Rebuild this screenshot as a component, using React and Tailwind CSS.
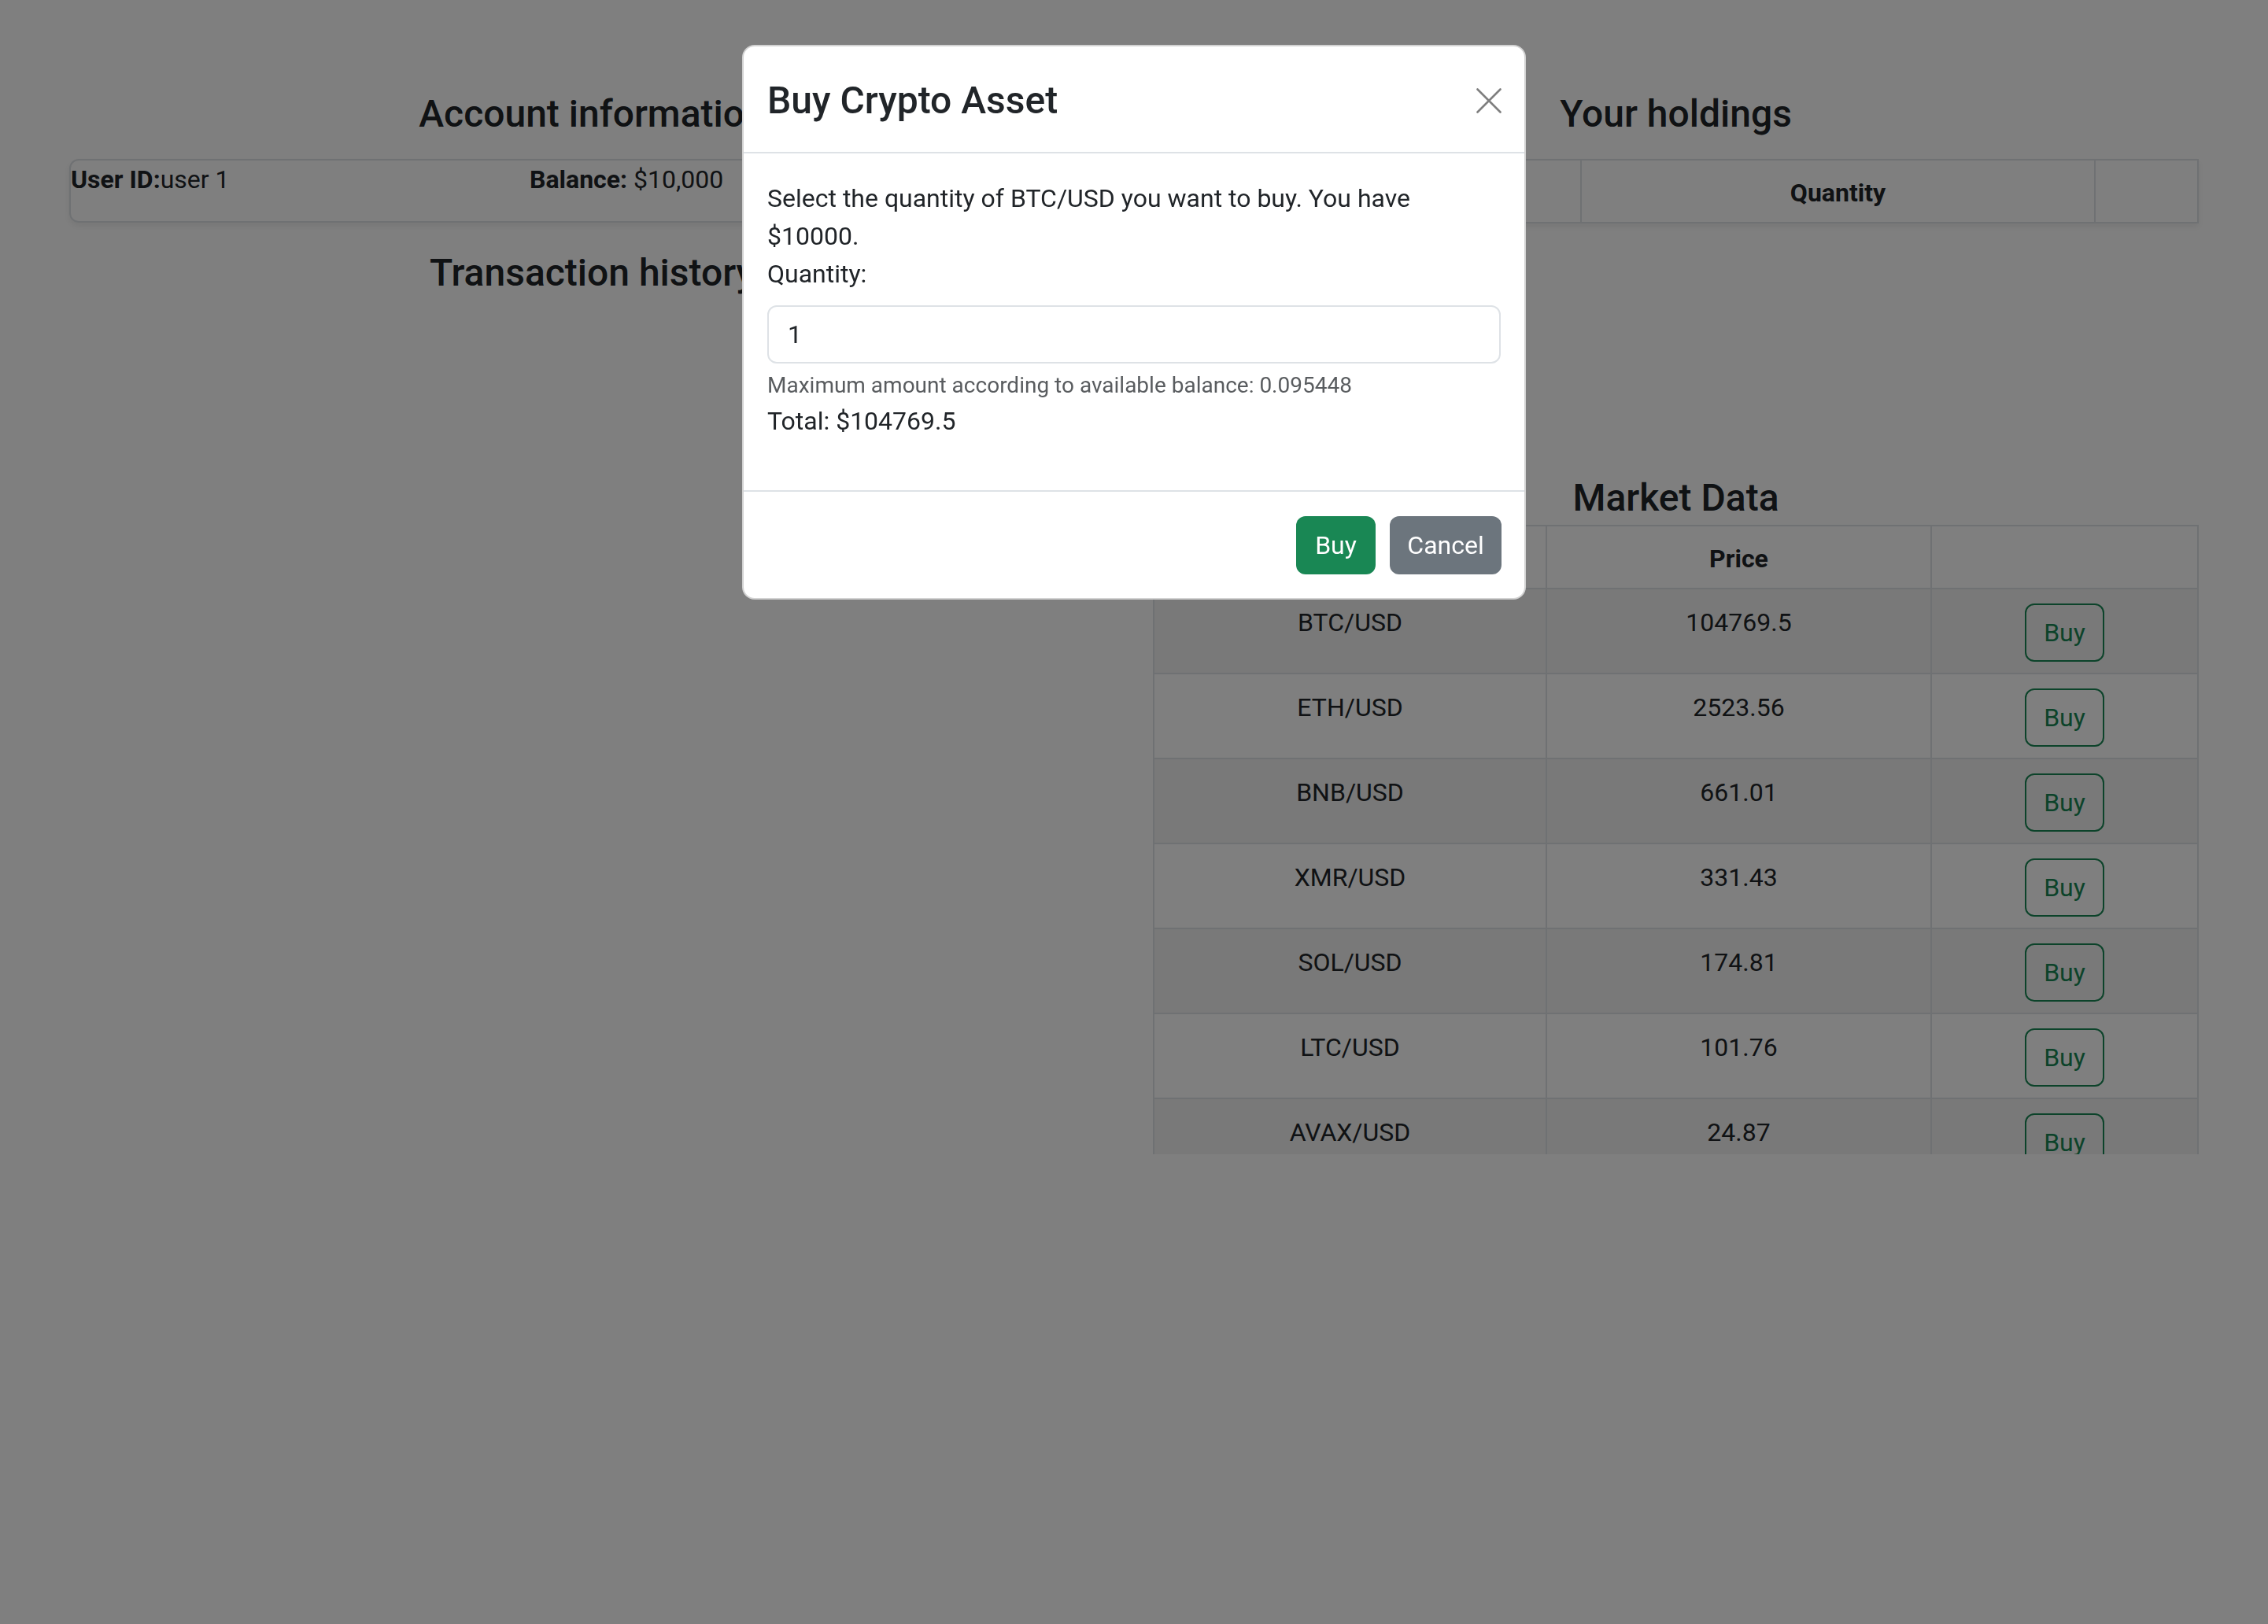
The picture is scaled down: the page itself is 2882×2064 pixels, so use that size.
import { useState } from "react";

const markets = [
	{ symbol: "BTC/USD", price: "104769.5" },
	{ symbol: "ETH/USD", price: "2523.56" },
	{ symbol: "BNB/USD", price: "661.01" },
	{ symbol: "XMR/USD", price: "331.43" },
	{ symbol: "SOL/USD", price: "174.81" },
	{ symbol: "LTC/USD", price: "101.76" },
	{ symbol: "AVAX/USD", price: "24.87" },
];

function CloseIcon() {
	return (
		<svg width="32" height="32" viewBox="0 0 32 32" className="-mr-[1px]">
			<path
				d="M1.5 1.5 L30.5 30.5 M30.5 1.5 L1.5 30.5"
				stroke="#000"
				strokeOpacity="0.5"
				strokeWidth="2.6"
				strokeLinecap="round"
			/>
		</svg>
	);
}

export default function App() {
	const [quantity, setQuantity] = useState("1");
	const price = 104769.5;
	const balance = 10000;

	return (
		<div className="relative min-h-[2064px] bg-white px-[88px] pt-[116px] font-[family-name:'Segoe_UI',Roboto,'Liberation_Sans',sans-serif] text-[32px] leading-[1.5] text-[#212529]">
			<div className="grid grid-cols-2 gap-x-[48px]">
				{/* Left column */}
				<div>
					<h4 className="text-center text-[48px] font-medium leading-[1.2] mb-[28px]">
						Account information
					</h4>
					<div className="flex border-2 border-[#dee2e6] rounded-[12px] pb-[29px] shadow-[0_4px_8px_rgba(0,0,0,0.075)]">
						<div className="w-[583px]">
							<strong className="font-bold">User ID:</strong>user 1
						</div>
						<div>
							<strong className="font-bold">Balance:</strong> $10,000
						</div>
					</div>
					<h4 className="text-center text-[48px] font-medium leading-[1.2] mt-[35px]">
						Transaction history
					</h4>
				</div>

				{/* Right column */}
				<div>
					<h4 className="text-center text-[48px] font-medium leading-[1.2] mb-[28px]">
						Your holdings
					</h4>
					<table className="w-full table-fixed border-collapse shadow-[0_4px_8px_rgba(0,0,0,0.075)]">
						<colgroup>
							<col className="w-[543px]" />
							<col className="w-[653px]" />
							<col />
						</colgroup>
						<thead>
							<tr>
								<th className="border-2 border-[#dee2e6] px-[16px] pt-[17px] pb-[13px] font-bold align-top">
									Symbol
								</th>
								<th className="border-2 border-[#dee2e6] px-[16px] pt-[17px] pb-[13px] font-bold align-top">
									Quantity
								</th>
								<th className="border-2 border-[#dee2e6] px-[16px] pt-[17px] pb-[13px]"></th>
							</tr>
						</thead>
					</table>

					<h4 className="text-center text-[48px] font-medium leading-[1.2] mt-[320px] mb-[6px]">
						Market Data
					</h4>
					<div className="max-h-[800px] overflow-hidden">
						<table className="w-full table-fixed border-collapse text-center">
							<colgroup>
								<col className="w-[499px]" />
								<col className="w-[489px]" />
								<col />
							</colgroup>
							<thead>
								<tr>
									<th className="border-2 border-[#dee2e6] px-[16px] pt-[17px] pb-[13px] font-bold align-top">
										Symbol
									</th>
									<th className="border-2 border-[#dee2e6] px-[16px] pt-[17px] pb-[13px] font-bold align-top">
										Price
									</th>
									<th className="border-2 border-[#dee2e6] px-[16px] pt-[17px] pb-[13px]"></th>
								</tr>
							</thead>
							<tbody>
								{markets.map((m, i) => (
									<tr
										key={m.symbol}
										className={i % 2 === 0 ? "bg-[#f2f2f2]" : "bg-white"}
									>
										<td className="border-2 border-[#dee2e6] px-[16px] pt-[18px] pb-[14px] align-top">
											{m.symbol}
										</td>
										<td className="border-2 border-[#dee2e6] px-[16px] pt-[18px] pb-[14px] align-top">
											{m.price}
										</td>
										<td className="border-2 border-[#dee2e6] px-[16px] pt-[18px] pb-[14px] align-top">
											<button className="w-[101px] h-[74px] border-2 border-[#198754] rounded-[12px] text-[#198754] leading-[1.5]">
												Buy
											</button>
										</td>
									</tr>
								))}
							</tbody>
						</table>
					</div>
				</div>
			</div>

			{/* Modal backdrop */}
			<div className="fixed inset-0 bg-black/50" />

			{/* Buy modal */}
			<div className="fixed inset-0 flex justify-center items-start pt-[57px]">
				<div className="w-[996px] bg-white border-2 border-black/[0.175] rounded-[16px]">
					<div className="flex items-center justify-between px-[30px] pt-[33px] pb-[29px] border-b-2 border-[#dee2e6]">
						<h4 className="text-[48px] font-medium leading-[1.5]">
							Buy Crypto Asset
						</h4>
						<CloseIcon />
					</div>
					<div className="px-[30px] pt-[33px] pb-[32px]">
						<p>
							Select the quantity of BTC/USD you want to buy. You have $
							{balance}.
						</p>
						<label className="block mb-[16px]">Quantity:</label>
						<input
							type="number"
							value={quantity}
							onChange={(e) => setQuantity(e.target.value)}
							className="block w-full h-[74px] px-[24px] border-2 border-[#dee2e6] rounded-[12px] text-[32px] text-[#212529] outline-none"
						/>
						<div className="mt-[7px] text-[28px] text-[#595c5f]">
							Maximum amount according to available balance:{" "}
							{(balance / price).toFixed(6)}
						</div>
						<p className="mb-[32px]">Total: ${price * Number(quantity || 0)}</p>
					</div>
					<div className="flex justify-end gap-[18px] pr-[29px] pt-[31px] pb-[30px] border-t-2 border-[#dee2e6]">
						<button className="w-[101px] h-[74px] rounded-[12px] bg-[#198754] text-white">
							Buy
						</button>
						<button className="w-[142px] h-[74px] rounded-[12px] bg-[#6c757d] text-white">
							Cancel
						</button>
					</div>
				</div>
			</div>
		</div>
	);
}
